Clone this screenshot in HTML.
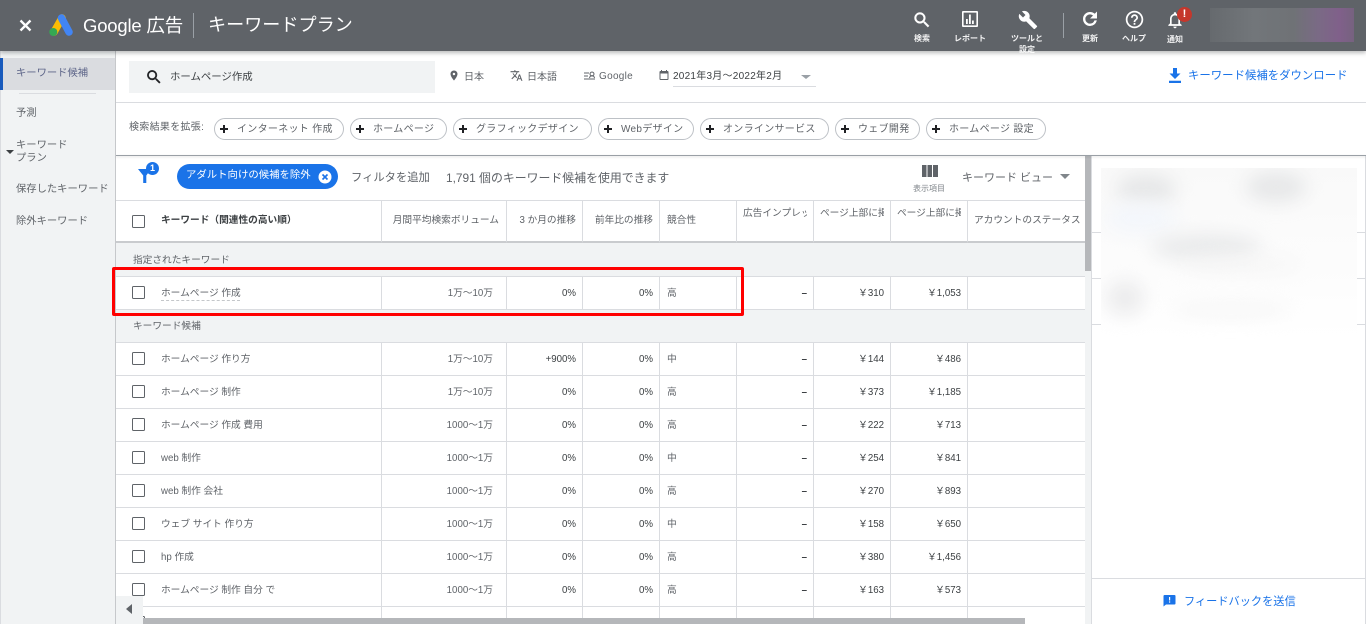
<!DOCTYPE html>
<html lang="ja"><head><meta charset="utf-8"><title>キーワードプラン</title>
<style>
*{box-sizing:border-box}
html,body{margin:0;padding:0;width:1366px;height:624px;overflow:hidden;background:#fff}
body{position:relative;font-family:"Liberation Sans","Noto Sans CJK JP",sans-serif;font-size:10px;color:#5f6368}
.a{position:absolute}
.t{position:absolute;white-space:nowrap;line-height:14px}
svg{position:absolute;display:block}
#hd{left:0;top:0;width:1366px;height:51px;background:#5f6368;box-shadow:0 2px 4px rgba(60,64,67,.35);z-index:5}
#hd .l{color:#fff;font-size:8px;font-weight:bold;line-height:11px;white-space:nowrap;position:absolute;opacity:.92}
.chip{position:absolute;top:118px;height:22px;border:1px solid #bdc1c6;border-radius:11px;background:#fff}
.chip b{position:absolute;left:4px;top:5px;width:10px;height:10px;background:linear-gradient(#202124,#202124) center/8px 2px no-repeat,linear-gradient(#202124,#202124) center/2px 8px no-repeat}
.chip span{position:absolute;left:22px;top:4px;line-height:14px;font-size:10px;white-space:nowrap;letter-spacing:.3px}
table{position:absolute;left:116px;top:200px;width:969px;border-collapse:separate;border-spacing:0;table-layout:fixed;background:#fff;font-size:9.700px}
td{height:33px;padding:2px 0 0;border-bottom:1px solid #dadce0;border-right:1px solid #dadce0;white-space:nowrap;overflow:hidden;position:relative;line-height:14px;color:#5f6368}
td:last-child{border-right:0}
td:first-child{padding-left:45px}
td.m{text-align:right;padding-right:13px}
td.r{text-align:right;padding-right:6px;color:#3c4043}
td.s{padding-left:7px}
td.d{font-weight:bold}
tr.h td{height:43px;padding-top:0;border-top:1px solid #dadce0;border-bottom:2px solid #c9cbce;color:#5f6368}
tr.h td.top{vertical-align:top;padding:6px 0 0 6px;overflow:hidden}
tr.g td{background:#f1f3f4;border-right:0;padding-left:17px}
i.c{position:absolute;left:16px;top:9px;width:13px;height:13px;border:1.3px solid #5f6368;border-radius:1.500px;background:#fff}
i.u{position:absolute;left:45px;top:23px;width:79px;height:0;border-top:1px dashed #c4c7ca}
#red{left:112px;top:267px;width:632px;height:49px;border:3px solid #f00;border-radius:2px;z-index:3}
.blob{position:absolute;border-radius:50%;filter:blur(9px)}
</style></head><body>

<div class="a" id="hd">
  <svg style="left:19px;top:19px" width="13" height="13" viewBox="0 0 13 13"><path d="M1.500 1.500 11.500 11.500M11.500 1.500 1.500 11.500" stroke="#fff" stroke-width="2.300"/></svg>
  <svg style="left:48px;top:13px" width="26" height="24" viewBox="0 0 26 24"><path d="M14 5 6 19" stroke="#fbbc04" stroke-width="7.500" stroke-linecap="round"/><path d="M13.500 5 21 19" stroke="#4285f4" stroke-width="7.500" stroke-linecap="round"/><circle cx="5.300" cy="19" r="4" fill="#34a853"/></svg>
  <div class="t" style="left:83px;top:15px;font-size:18.500px;line-height:22px;color:#fff;letter-spacing:-.2px">Google 広告</div>
  <div class="a" style="left:193px;top:13px;width:1px;height:25px;background:#9aa0a6"></div>
  <div class="t" style="left:208px;top:14px;font-size:18.100px;line-height:22px;color:#fff">キーワードプラン</div>

  <svg style="left:912px;top:10px" width="20" height="20" viewBox="0 0 24 24"><path fill="#fff" stroke="#fff" stroke-width=".6" d="M15.500 14h-.79l-.28-.27A6.471 6.471 0 0 0 16 9.500 6.500 6.500 0 1 0 9.500 16c1.610 0 3.090-.59 4.230-1.570l.27.28v.79l5 4.990L20.490 19l-4.990-5zm-6 0C7.010 14 5 11.990 5 9.500S7.010 5 9.500 5 14 7.010 14 9.500 11.990 14 9.500 14z"/></svg>
  <div class="l" style="left:914px;top:33px">検索</div>
  <svg style="left:961px;top:10px" width="18" height="18" viewBox="0 0 18 18"><path fill="#fff" fill-rule="evenodd" d="M2 1h14a1 1 0 0 1 1 1v14a1 1 0 0 1-1 1H2a1 1 0 0 1-1-1V2a1 1 0 0 1 1-1zm.6 1.600v12.800h12.800V2.600zM5 9h1.800v5H5zm3-4.500h1.800V14H8zM11 10.500h1.800V14H11z"/></svg>
  <div class="l" style="left:954px;top:33px">レポート</div>
  <svg style="left:1018px;top:10px" width="20" height="20" viewBox="0 0 24 24"><path fill="#fff" d="M22.700 19l-9.100-9.100c.9-2.300.4-5-1.500-6.900-2-2-5-2.400-7.400-1.300L9 6 6 9 1.600 4.700C.4 7.100.9 10.100 2.900 12.100c1.900 1.900 4.600 2.400 6.900 1.500l9.100 9.100c.4.4 1 .4 1.400 0l2.300-2.300c.5-.4.5-1.100.1-1.400z"/></svg>
  <div class="l" style="left:1011px;top:33px">ツールと</div>
  <div class="l" style="left:1019px;top:44px">設定</div>
  <div class="a" style="left:1063px;top:13px;width:1px;height:25px;background:#9aa0a6"></div>
  <svg style="left:1080px;top:9px" width="20" height="20" viewBox="0 0 24 24"><path fill="#fff" stroke="#fff" stroke-width=".8" d="M17.650 6.350A7.958 7.958 0 0 0 12 4c-4.420 0-7.990 3.580-7.990 8s3.570 8 7.990 8c3.730 0 6.840-2.550 7.730-6h-2.080A5.990 5.990 0 0 1 12 18c-3.310 0-6-2.690-6-6s2.690-6 6-6c1.660 0 3.140.69 4.220 1.780L13 11h7V4l-2.350 2.350z"/></svg>
  <div class="l" style="left:1082px;top:33px">更新</div>
  <svg style="left:1124px;top:9px" width="21" height="21" viewBox="0 0 24 24"><path fill="#fff" d="M11 18h2v-2h-2v2zm1-16C6.480 2 2 6.480 2 12s4.480 10 10 10 10-4.480 10-10S17.520 2 12 2zm0 18c-4.410 0-8-3.590-8-8s3.590-8 8-8 8 3.590 8 8-3.590 8-8 8zm0-14c-2.210 0-4 1.790-4 4h2c0-1.100.9-2 2-2s2 .9 2 2c0 2-3 1.750-3 5h2c0-2.250 3-2.500 3-5 0-2.210-1.790-4-4-4z"/></svg>
  <div class="l" style="left:1122px;top:33px">ヘルプ</div>
  <svg style="left:1165px;top:10px" width="20" height="20" viewBox="0 0 24 24"><path fill="#fff" d="M12 22c1.100 0 2-.9 2-2h-4c0 1.100.9 2 2 2zm6-6v-5c0-3.070-1.630-5.640-4.500-6.320V4c0-.83-.67-1.500-1.500-1.500s-1.500.67-1.500 1.500v.68C7.640 5.360 6 7.920 6 11v5l-2 2v1h16v-1l-2-2zm-2 1H8v-6c0-2.480 1.510-4.500 4-4.500s4 2.020 4 4.500v6z"/></svg>
  <div class="a" style="left:1177px;top:7px;width:15px;height:15px;border-radius:50%;background:#c5372c;color:#fff;font-weight:bold;font-size:11px;line-height:15px;text-align:center">!</div>
  <div class="l" style="left:1167px;top:34px">通知</div>
  <div class="a" style="left:1210px;top:8px;width:144px;height:34px;background:linear-gradient(90deg,#666a6e 0%,#72767a 30%,#6f7276 58%,#7a6a85 75%,#80608a 90%,#76627f 100%)"></div>
</div>

<!-- sidebar -->
<div class="a" style="left:0;top:51px;width:116px;height:573px;background:#f1f3f4;border-right:1px solid #c6c8cb;border-left:1px solid #dadce0"></div>
<div class="a" style="left:0;top:58px;width:115px;height:32px;background:#dadce0"></div>
<div class="a" style="left:0;top:58px;width:3px;height:32px;background:#185abc"></div>
<div class="a" style="left:19px;top:93px;width:77px;height:1px;background:#dadce0"></div>
<div class="t" style="left:16px;top:67px;font-size:10.300px;color:#5c6488">キーワード候補</div>
<div class="t" style="left:16px;top:107px;font-size:10.300px">予測</div>
<div class="t" style="left:16px;top:140px;font-size:10.300px;line-height:12.500px">キーワード<br>プラン</div>
<div class="a" style="left:6px;top:150px;border-left:4px solid transparent;border-right:4px solid transparent;border-top:4px solid #3c4043"></div>
<div class="t" style="left:16px;top:183px;font-size:10.300px">保存したキーワード</div>
<div class="t" style="left:16px;top:215px;font-size:10.300px">除外キーワード</div>

<!-- search bar row -->
<div class="a" style="left:129px;top:61px;width:306px;height:32px;background:#f1f3f4"></div>
<svg style="left:145px;top:68px" width="18" height="18" viewBox="0 0 24 24"><path fill="#202124" stroke="#202124" stroke-width=".5" d="M15.500 14h-.79l-.28-.27A6.471 6.471 0 0 0 16 9.500 6.500 6.500 0 1 0 9.500 16c1.610 0 3.090-.59 4.230-1.570l.27.28v.79l5 4.990L20.490 19l-4.990-5zm-6 0C7.010 14 5 11.990 5 9.500S7.010 5 9.500 5 14 7.010 14 9.500 11.990 14 9.500 14z"/></svg>
<div class="t" style="left:170px;top:71px;color:#3c4043;font-size:10.400px">ホームページ作成</div>

<svg style="left:448px;top:69px" width="12" height="13" viewBox="0 0 24 24"><path fill="#5f6368" d="M12 2C8.130 2 5 5.130 5 9c0 5.250 7 13 7 13s7-7.750 7-13c0-3.870-3.130-7-7-7zm0 9.500a2.500 2.500 0 1 1 0-5 2.500 2.500 0 0 1 0 5z"/></svg>
<div class="t" style="left:464px;top:71px">日本</div>
<svg style="left:510px;top:69px" width="13" height="13" viewBox="0 0 24 24"><path fill="#5f6368" d="M12.870 15.070l-2.540-2.510.03-.03A17.520 17.520 0 0 0 14.070 6H17V4h-7V2H8v2H1v2h11.170C11.500 7.920 10.440 9.750 9 11.350 8.070 10.320 7.300 9.190 6.690 8h-2c.73 1.630 1.730 3.170 2.980 4.560l-5.090 5.020L4 19l5-5 3.110 3.110.76-2.040zM18.500 10h-2L12 22h2l1.120-3h4.750L21 22h2l-4.500-12zm-2.620 7l1.620-4.330L19.120 17h-3.240z"/></svg>
<div class="t" style="left:527px;top:71px;font-size:10px">日本語</div>
<svg style="left:584px;top:71px" width="12" height="10" viewBox="0 0 12 10"><path d="M0 2h5M0 5h4M0 8h11M8 1a2 2 0 1 1-.01 0M5.500 7c.3-1.600 1.300-2.400 2.500-2.400s2.200.8 2.500 2.400" stroke="#5f6368" fill="none" stroke-width="1"/></svg>
<div class="t" style="left:599px;top:70px;letter-spacing:.3px">Google</div>
<svg style="left:658px;top:69px" width="12" height="13" viewBox="0 0 24 24"><path fill="#5f6368" d="M19 3h-1V1h-2v2H8V1H6v2H5c-1.100 0-2 .9-2 2v14c0 1.100.9 2 2 2h14c1.100 0 2-.9 2-2V5c0-1.100-.9-2-2-2zm0 16H5V8h14v11z"/></svg>
<div class="t" style="left:673px;top:70px;color:#3c4043;letter-spacing:.25px">2021年3月～2022年2月</div>
<div class="a" style="left:801px;top:75px;border-left:5px solid transparent;border-right:5px solid transparent;border-top:4px solid #9aa0a6"></div>
<div class="a" style="left:673px;top:86px;width:143px;height:1px;background:#dadce0"></div>

<svg style="left:1168px;top:68px" width="14" height="15" viewBox="0 0 14 15"><path fill="#1a73e8" d="M5 0h4v5.500h3.500L7 11 1.500 5.500H5zM1 12.800h12V15H1z"/></svg>
<div class="t" style="left:1188px;top:69px;font-size:11.400px;color:#1a73e8">キーワード候補をダウンロード</div>

<div class="a" style="left:116px;top:102px;width:1250px;height:1px;background:#dadce0"></div>

<!-- expand row -->
<div class="t" style="left:129px;top:121px;letter-spacing:.3px">検索結果を拡張:</div>
<div class="chip" style="left:214px;width:130px"><b></b><span>インターネット 作成</span></div>
<div class="chip" style="left:350px;width:97px"><b></b><span>ホームページ</span></div>
<div class="chip" style="left:453px;width:139px"><b></b><span>グラフィックデザイン</span></div>
<div class="chip" style="left:598px;width:96px"><b></b><span>Webデザイン</span></div>
<div class="chip" style="left:700px;width:129px"><b></b><span>オンラインサービス</span></div>
<div class="chip" style="left:835px;width:85px"><b></b><span>ウェブ開発</span></div>
<div class="chip" style="left:926px;width:120px"><b></b><span>ホームページ 設定</span></div>
<div class="a" style="left:116px;top:155px;width:1250px;height:1px;background:#9aa0a6;box-shadow:0 1px 2px rgba(60,64,67,.2);z-index:2"></div>

<!-- filter row -->
<svg style="left:138px;top:168px" width="14" height="16" viewBox="0 0 14 16"><path fill="#1a73e8" d="M0 1h13L8.300 7.500V15H5.200V7.500z"/></svg>
<div class="a" style="left:146px;top:162px;width:13px;height:13px;border-radius:50%;background:#1a73e8;color:#fff;font-size:9px;font-weight:bold;line-height:13px;text-align:center">1</div>
<div class="a" style="left:177px;top:164px;width:161px;height:25px;border-radius:13px;background:#1a73e8"></div>
<div class="t" style="left:186px;top:169px;color:#fff;font-size:10.400px">アダルト向けの候補を除外</div>
<svg style="left:318px;top:170px" width="14" height="14" viewBox="0 0 14 14"><circle cx="7" cy="7" r="6.500" fill="#fff"/><path d="M4.500 4.500l5 5M9.500 4.500l-5 5" stroke="#1a73e8" stroke-width="1.600"/></svg>
<div class="t" style="left:351px;top:171px;font-size:11.300px">フィルタを追加</div>
<div class="t" style="left:446px;top:171px;font-size:11.900px">1,791 個のキーワード候補を使用できます</div>
<svg style="left:922px;top:165px" width="16" height="12" viewBox="0 0 16 12"><path fill="#5f6368" d="M0 0h4.500v12H0zM5.500 0H10v12H5.500zM11 0h5v12h-5z"/></svg>
<div class="t" style="left:913px;top:182px;font-size:8px;color:#80868b">表示項目</div>
<div class="t" style="left:962px;top:171px;font-size:11px">キーワード ビュー</div>
<div class="a" style="left:1060px;top:174px;border-left:5px solid transparent;border-right:5px solid transparent;border-top:5px solid #80868b"></div>

<!-- table -->
<table>
<colgroup><col style="width:266px"><col style="width:125px"><col style="width:76px"><col style="width:77px"><col style="width:77px"><col style="width:77px"><col style="width:77px"><col style="width:77px"><col style="width:117px"></colgroup>
<tr class="h">
<td style="font-weight:bold;color:#3c4043"><i class="c" style="top:14px"></i>キーワード（関連性の高い順）</td>
<td class="r" style="color:#5f6368;padding-right:7px">月間平均検索ボリューム</td>
<td class="r" style="color:#5f6368">3 か月の推移</td>
<td class="r" style="color:#5f6368">前年比の推移</td>
<td class="s">競合性</td>
<td class="top"><div style="width:64px;overflow:hidden">広告インプレッション</div></td>
<td class="top"><div style="width:64px;overflow:hidden">ページ上部に掲載</div></td>
<td class="top"><div style="width:64px;overflow:hidden">ページ上部に掲載</div></td>
<td style="padding-left:6px">アカウントのステータス</td>
</tr>
<tr class="g"><td colspan="9" style="height:34px">指定されたキーワード</td></tr>
<tr><td><i class="c"></i><i class="u"></i>ホームページ 作成</td><td class="m">1万～10万</td><td class="r">0%</td><td class="r">0%</td><td class="s">高</td><td class="r d">–</td><td class="r">￥310</td><td class="r">￥1,053</td><td></td></tr>
<tr class="g"><td colspan="9">キーワード候補</td></tr>
<tr><td><i class="c"></i>ホームページ 作り方</td><td class="m">1万～10万</td><td class="r">+900%</td><td class="r">0%</td><td class="s">中</td><td class="r d">–</td><td class="r">￥144</td><td class="r">￥486</td><td></td></tr>
<tr><td><i class="c"></i>ホームページ 制作</td><td class="m">1万～10万</td><td class="r">0%</td><td class="r">0%</td><td class="s">高</td><td class="r d">–</td><td class="r">￥373</td><td class="r">￥1,185</td><td></td></tr>
<tr><td><i class="c"></i>ホームページ 作成 費用</td><td class="m">1000～1万</td><td class="r">0%</td><td class="r">0%</td><td class="s">高</td><td class="r d">–</td><td class="r">￥222</td><td class="r">￥713</td><td></td></tr>
<tr><td><i class="c"></i>web 制作</td><td class="m">1000～1万</td><td class="r">0%</td><td class="r">0%</td><td class="s">中</td><td class="r d">–</td><td class="r">￥254</td><td class="r">￥841</td><td></td></tr>
<tr><td><i class="c"></i>web 制作 会社</td><td class="m">1000～1万</td><td class="r">0%</td><td class="r">0%</td><td class="s">高</td><td class="r d">–</td><td class="r">￥270</td><td class="r">￥893</td><td></td></tr>
<tr><td><i class="c"></i>ウェブ サイト 作り方</td><td class="m">1000～1万</td><td class="r">0%</td><td class="r">0%</td><td class="s">中</td><td class="r d">–</td><td class="r">￥158</td><td class="r">￥650</td><td></td></tr>
<tr><td><i class="c"></i>hp 作成</td><td class="m">1000～1万</td><td class="r">0%</td><td class="r">0%</td><td class="s">高</td><td class="r d">–</td><td class="r">￥380</td><td class="r">￥1,456</td><td></td></tr>
<tr><td><i class="c"></i>ホームページ 制作 自分 で</td><td class="m">1000～1万</td><td class="r">0%</td><td class="r">0%</td><td class="s">高</td><td class="r d">–</td><td class="r">￥163</td><td class="r">￥573</td><td></td></tr>
<tr><td><i class="c"></i></td><td></td><td></td><td></td><td></td><td></td><td></td><td></td><td></td></tr>
</table>

<div class="a" id="red"></div>

<!-- scrollbars -->
<div class="a" style="left:1085px;top:156px;width:6px;height:468px;background:#f1f3f4"></div>
<div class="a" style="left:1085px;top:156px;width:6px;height:115px;background:#b5b7ba"></div>
<div class="a" style="left:116px;top:596px;width:27px;height:28px;background:#f1f3f4"></div>
<div class="a" style="left:126px;top:604px;border-top:5px solid transparent;border-bottom:5px solid transparent;border-right:6px solid #5f6368"></div>
<div class="a" style="left:143px;top:618px;width:882px;height:6px;background:#b5b7ba"></div>

<!-- right panel -->
<div class="a" style="left:1091px;top:156px;width:275px;height:468px;background:#fff;border-left:1px solid #dadce0;border-right:1px solid #dadce0"></div>
<div class="a" style="left:1092px;top:232px;width:273px;height:1px;background:#dadce0"></div>
<div class="a" style="left:1092px;top:278px;width:273px;height:1px;background:#dadce0"></div>
<div class="a" style="left:1092px;top:324px;width:273px;height:1px;background:#dadce0"></div>
<div class="a" style="left:1092px;top:578px;width:273px;height:1px;background:#dadce0"></div>
<div class="a" style="left:1101px;top:168px;width:256px;height:172px;background:linear-gradient(#f9f9f9,#fdfdfd 70%,#fff);overflow:hidden">
  <div class="blob" style="left:15px;top:6px;width:60px;height:30px;background:#e6e7e8"></div>
  <div class="blob" style="left:145px;top:4px;width:60px;height:30px;background:#e6e7e8"></div>
  <div class="blob" style="left:5px;top:35px;width:70px;height:30px;background:#f3f6fb"></div>
  <div class="blob" style="left:50px;top:66px;width:110px;height:26px;background:#e9eaeb"></div>
  <div class="blob" style="left:5px;top:112px;width:38px;height:36px;background:#ececed"></div>
  <div class="blob" style="left:80px;top:90px;width:120px;height:14px;background:#f5f5f5"></div>
  <div class="blob" style="left:70px;top:135px;width:120px;height:14px;background:#f6f6f6"></div>
</div>
<svg style="left:1163px;top:594px" width="13" height="13" viewBox="0 0 13 13"><path fill="#1a73e8" d="M1.500 1h10a1 1 0 0 1 1 1v7.500a1 1 0 0 1-1 1H3L.5 12.500V2a1 1 0 0 1 1-1z"/><path fill="#fff" d="M6 3h1.200v3.500H6zM6 7.400h1.200v1.200H6z"/></svg>
<div class="t" style="left:1184px;top:595px;font-size:11.200px;color:#1a73e8">フィードバックを送信</div>
</body></html>
